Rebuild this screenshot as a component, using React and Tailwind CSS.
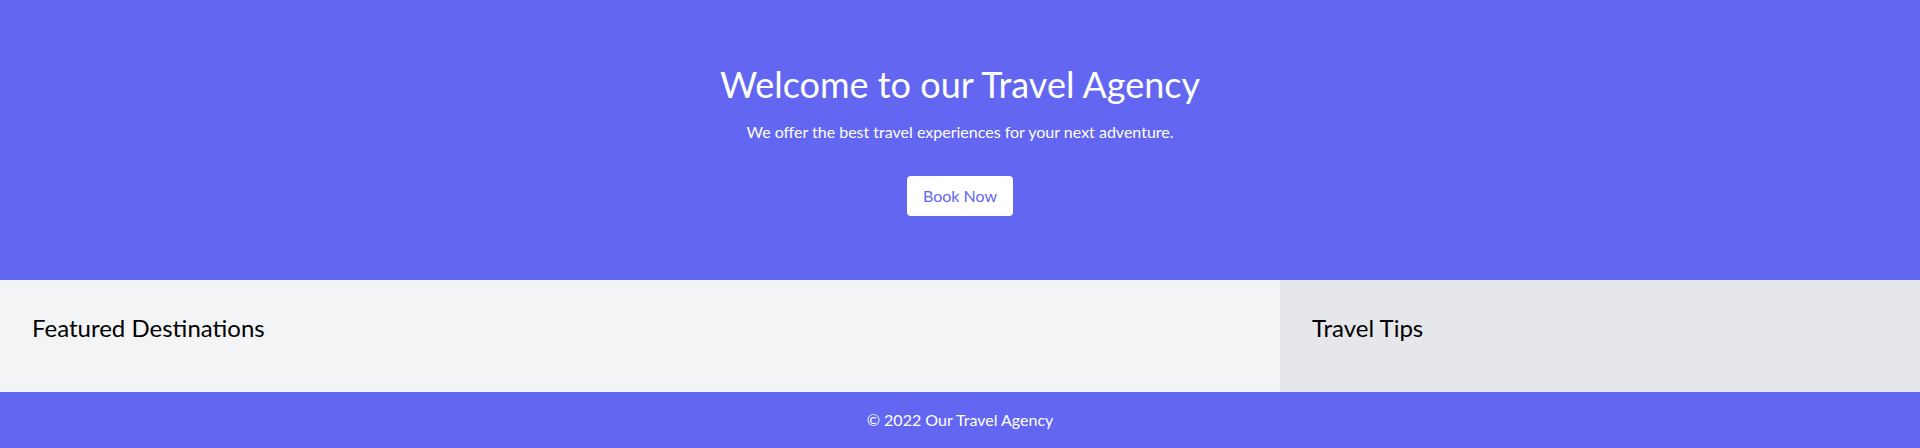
export default function App() {
  return (
    <div className="min-h-screen font-['Lato',sans-serif]">
      <section className="bg-[#6366f1] px-8 py-16 text-center text-white">
        <h1 className="text-4xl">Welcome to our Travel Agency</h1>
        <p className="mt-4 text-base">We offer the best travel experiences for your next adventure.</p>
        <button className="mt-8 rounded bg-white px-4 py-2 text-base text-[#6366f1]">Book Now</button>
      </section>

      <div className="flex">
        <section className="w-2/3 bg-[#f3f4f6] p-8">
          <h2 className="mb-4 text-2xl text-black">Featured Destinations</h2>
        </section>
        <section className="w-1/3 bg-[#e5e7eb] p-8">
          <h2 className="mb-4 text-2xl text-black">Travel Tips</h2>
        </section>
      </div>

      <footer className="bg-[#6366f1] py-4 text-center text-white">
        <p>© 2022 Our Travel Agency</p>
      </footer>
    </div>
  );
}
